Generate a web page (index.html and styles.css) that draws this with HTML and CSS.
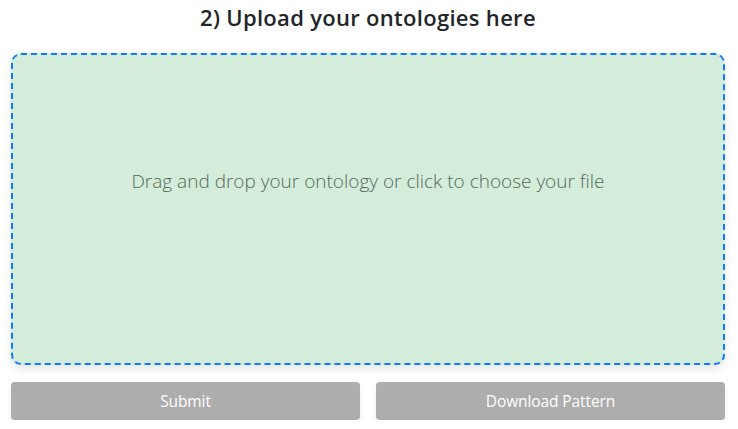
FILE: index.html
```html
<!DOCTYPE html>
<html>
<head>
<meta charset="utf-8">
<link rel="stylesheet" href="styles.css">
</head>
<body>
<div class="page">
  <h2 class="title">2) Upload your ontologies here</h2>
  <div class="dropzone">
    <p class="drop-text">Drag and drop your ontology or click to choose your file</p>
  </div>
  <div class="actions">
    <button class="btn">Submit</button>
    <button class="btn">Download Pattern</button>
  </div>
</div>
</body>
</html>
```
FILE: styles.css
```css
html, body {
  margin: 0;
  padding: 0;
  background: #ffffff;
  font-family: "Open Sans", "Noto Sans", sans-serif;
}
.page {
  padding: 0 13px 0 11px;
  display: flex;
  flex-direction: column;
}
.title {
  margin: 0;
  height: 36px;
  line-height: 34px;
  text-align: center;
  font-size: 22px;
  font-weight: 600;
  color: #212529;
  letter-spacing: 0.3px;
}
.dropzone {
  margin-top: 17px;
  height: 308px;
  box-sizing: content-box;
  background: #d4edda;
  border: 2px dashed #0d7bff;
  border-radius: 10px;
  box-shadow: 0 4px 10px rgba(0, 0, 0, 0.10);
  display: flex;
  flex-direction: column;
  align-items: center;
}
.drop-text {
  margin: 0;
  padding-top: 113px;
  line-height: 26px;
  font-size: 19px;
  font-weight: 300;
  color: #56695c;
}
.actions {
  margin-top: 17px;
  display: grid;
  grid-template-columns: 1fr 1fr;
  gap: 16px;
}
.btn {
  height: 38px;
  border: none;
  border-radius: 4px;
  background: #adadad;
  color: #ffffff;
  font-family: "Open Sans", "Noto Sans", sans-serif;
  font-size: 15.5px;
  box-shadow: 0 2px 6px rgba(0, 0, 0, 0.08);
  letter-spacing: -0.1px;
}
```
